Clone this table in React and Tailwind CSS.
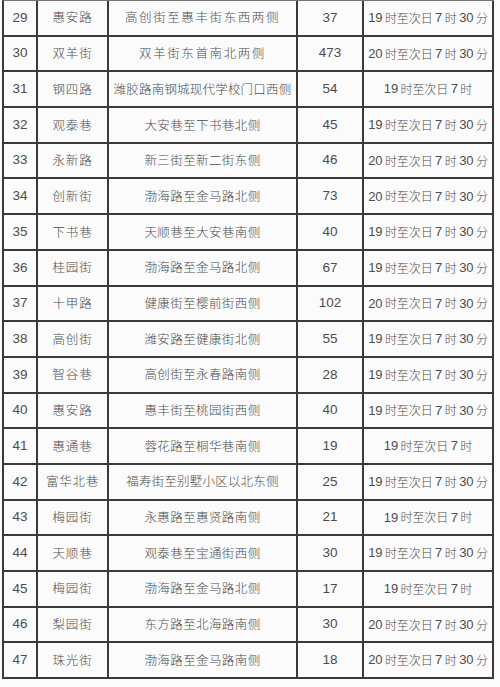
import React from 'react'

// Night parking schedule table, rows 29-47 (scanned document look).
const rows = [
  [29, '惠安路', '高创街至惠丰街东西两侧', '37', '19 时至次日 7 时 30 分', 'wide'],
  [30, '双羊街', '双羊街东首南北两侧', '473', '20 时至次日 7 时 30 分', 'wide'],
  [31, '钢四路', '潍胶路南钢城现代学校门口西侧', '54', '19 时至次日 7 时', 'tight'],
  [32, '观泰巷', '大安巷至下书巷北侧', '45', '19 时至次日 7 时 30 分'],
  [33, '永新路', '新三街至新二街东侧', '46', '20 时至次日 7 时 30 分'],
  [34, '创新街', '渤海路至金马路北侧', '73', '20 时至次日 7 时 30 分'],
  [35, '下书巷', '天顺巷至大安巷南侧', '40', '19 时至次日 7 时 30 分'],
  [36, '桂园街', '渤海路至金马路北侧', '67', '19 时至次日 7 时 30 分'],
  [37, '十甲路', '健康街至樱前街西侧', '102', '20 时至次日 7 时 30 分'],
  [38, '高创街', '潍安路至健康街北侧', '55', '19 时至次日 7 时 30 分'],
  [39, '智谷巷', '高创街至永春路南侧', '28', '19 时至次日 7 时 30 分'],
  [40, '惠安路', '惠丰街至桃园街西侧', '40', '19 时至次日 7 时 30 分'],
  [41, '惠通巷', '蓉花路至桐华巷南侧', '19', '19 时至次日 7 时'],
  [42, '富华北巷', '福寿街至别墅小区以北东侧', '25', '19 时至次日 7 时 30 分', 'tight'],
  [43, '梅园街', '永惠路至惠贤路南侧', '21', '19 时至次日 7 时'],
  [44, '天顺巷', '观泰巷至宝通街西侧', '30', '19 时至次日 7 时 30 分'],
  [45, '梅园街', '渤海路至金马路北侧', '17', '19 时至次日 7 时'],
  [46, '梨园街', '东方路至北海路南侧', '30', '20 时至次日 7 时 30 分'],
  [47, '珠光街', '渤海路至金马路南侧', '18', '20 时至次日 7 时 30 分'],
]

const cjk = "font-['Noto_Sans_CJK_SC','Noto_Sans',sans-serif] font-light"
const latin = "font-['Liberation_Sans',Arial,sans-serif]"

// digits in Arial-width, the rest in the CJK face at a smaller size
function Mixed({ text }) {
  return text.split(/(\d+| )/).filter(Boolean).map((part, i) =>
    part === ' '
      ? <span key={i} className="inline-block w-[2.5px]" />
      : /\d/.test(part)
        ? <span key={i} className={`${latin} text-[13px]`}>{part}</span>
        : <span key={i} className={`${cjk} text-[12px]`}>{part}</span>
  )
}

const cell = 'flex items-center justify-center border-r-2 border-b-2 border-[#3a3a3a] whitespace-nowrap overflow-hidden'

export default function App() {
  return (
    <div className="w-[500px] h-[687px] bg-[#fbfbfb] pl-[2px] overflow-hidden">
      <div className="w-[492px] border-l-2 border-t border-[#3a3a3a] border-t-[#777] text-[#4d4d4d]">
        {rows.map(([no, name, desc, count, time, fit]) => (
          <div key={no} className="grid grid-cols-[34px_71px_189px_66px_130px] h-[35.7px]">
            <div className={`${cell} ${latin} text-[13.5px]`}>{no}</div>
            <div className={`${cell} ${cjk} text-[12.5px] tracking-[0.8px]`}>{name}</div>
            <div className={`${cell} ${cjk} text-[12.5px] ${fit === 'wide' ? 'tracking-[1.6px]' : fit === 'tight' ? 'tracking-[0.2px]' : 'tracking-[0.4px]'}`}>
              {desc}
            </div>
            <div className={`${cell} ${latin} text-[13.5px]`}>{count}</div>
            <div className={`${cell} tracking-[-0.1px]`}><Mixed text={time} /></div>
          </div>
        ))}
      </div>
    </div>
  )
}
